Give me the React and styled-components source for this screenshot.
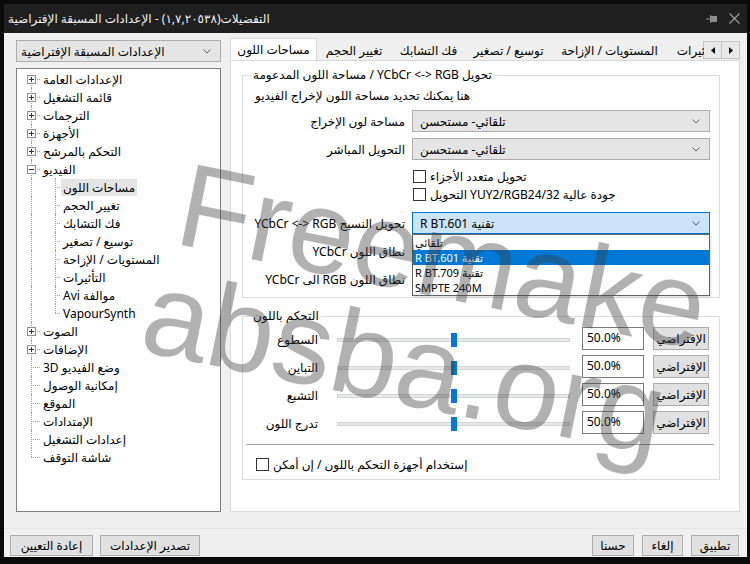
import React from "react";
import styled, { createGlobalStyle } from "styled-components";

const GlobalStyle = createGlobalStyle`
  * { box-sizing: border-box; }
  html, body { margin: 0; padding: 0; background: #0a0a0a; }
  body {
    font-family: "Noto Sans", "DejaVu Sans", sans-serif;
    font-size: 12px;
    color: #000;
  }
`;

const treeData = [
  { label: "الإعدادات العامة", box: "plus" },
  { label: "قائمة التشغيل", box: "plus" },
  { label: "الترجمات", box: "plus" },
  { label: "الأجهزة", box: "plus" },
  { label: "التحكم بالمرشح", box: "plus" },
  {
    label: "الفيديو",
    box: "minus",
    children: [
      "مساحات اللون",
      "تغيير الحجم",
      "فك التشابك",
      "توسيع / تصغير",
      "المستويات / الإزاحة",
      "التأثيرات",
      "موالفة Avi",
      "VapourSynth",
    ],
  },
  { label: "الصوت", box: "plus" },
  { label: "الإضافات", box: "plus" },
  { label: "وضع الفيديو 3D" },
  { label: "إمكانية الوصول" },
  { label: "الموقع" },
  { label: "الإمتدادات" },
  { label: "إعدادات التشغيل" },
  { label: "شاشة التوقف" },
];

const tabs = [
  { label: "مساحات اللون", w: 87, active: true },
  { label: "تغيير الحجم", w: 74 },
  { label: "فك التشابك", w: 75 },
  { label: "توسيع / تصغير", w: 85 },
  { label: "المستويات / الإزاحة", w: 117 },
  { label: "التأثيرات", w: 60 },
];

const sliders = ["السطوع", "التباين", "التشبع", "تدرج اللون"];

// Arabic strings keep right-to-left reading order inside left-aligned controls
const Rtl = styled.span`
  direction: rtl;
  unicode-bidi: isolate;
`;

const Frame = styled.div`
  position: relative;
  width: 750px;
  height: 564px;
  padding: 4px 3px 7px 4px;
  background: #0a0a0a;
  display: flex;
  flex-direction: column;
  overflow: hidden;
`;

const TitleBar = styled.div`
  flex: none;
  height: 29px;
  background: #1f1f1f;
  color: #f0f0f0;
  display: flex;
  align-items: center;
  justify-content: space-between;
  padding: 0 7px 0 4px;
`;

const TitleText = styled(Rtl)`
  font-size: 12px;
  white-space: nowrap;
`;

const TitleButtons = styled.div`
  display: flex;
  align-items: center;
  gap: 11px;
`;

const Body = styled.div`
  flex: 1;
  min-height: 0;
  background: #f0f0f0;
  display: flex;
  flex-direction: column;
`;

const Main = styled.div`
  flex: 1;
  min-height: 0;
  display: flex;
  gap: 9px;
  padding: 5px 7px 0 12px;
`;

const Sidebar = styled.div`
  flex: none;
  width: 205px;
  display: flex;
  flex-direction: column;
  gap: 6px;
  padding-top: 2px;
`;

const Combo = styled.div`
  position: relative;
  height: 22px;
  display: flex;
  align-items: center;
  justify-content: space-between;
  padding: 0 9px 0 ${(p) => p.$pl || 7}px;
  background: ${(p) => (p.$focus ? "#cce4f7" : "#e5e5e5")};
  border: 1px solid ${(p) => (p.$focus ? "#0078d7" : "#adadad")};
  white-space: nowrap;
`;

const Tree = styled.div`
  flex: 1;
  background: #fff;
  border: 1px solid #828282;
  padding-top: 1px;
`;

const TreeRow = styled.div`
  height: 18px;
  display: flex;
  align-items: center;
`;

const Guide = styled.div`
  position: relative;
  flex: none;
  width: ${(p) => p.$w}px;
  height: 18px;

  &::before {
    content: "";
    display: ${(p) => (p.$v ? "block" : "none")};
    position: absolute;
    left: ${(p) => p.$x}px;
    top: ${(p) => (p.$v === "lower" ? 9 : 0)}px;
    bottom: ${(p) => (p.$v === "upper" ? 9 : 0)}px;
    border-left: 1px dotted #a0a0a0;
  }

  &::after {
    content: "";
    display: ${(p) => (p.$h ? "block" : "none")};
    position: absolute;
    left: ${(p) => p.$x}px;
    right: 1px;
    top: 9px;
    border-top: 1px dotted #a0a0a0;
  }
`;

const ExpandBox = styled.span`
  position: absolute;
  z-index: 1;
  left: ${(p) => p.$x - 4}px;
  top: 5px;
  width: 9px;
  height: 9px;
  background: #fff;
  border: 1px solid #919191;

  &::before {
    content: "";
    position: absolute;
    left: 1px;
    top: 3px;
    width: 5px;
    height: 1px;
    background: #333;
  }

  &::after {
    content: "";
    display: ${(p) => (p.$plus ? "block" : "none")};
    position: absolute;
    left: 3px;
    top: 1px;
    width: 1px;
    height: 5px;
    background: #333;
  }
`;

const TreeLabel = styled(Rtl)`
  padding: 0 2px;
  line-height: 17px;
  white-space: nowrap;
  background: ${(p) => (p.$selected ? "#e5e5e5" : "transparent")};
`;

const Content = styled.div`
  flex: 1;
  min-width: 0;
  display: flex;
  flex-direction: column;
`;

const TabStrip = styled.div`
  flex: none;
  height: 22px;
  display: flex;
  align-items: flex-end;
`;

const TabScroll = styled.div`
  flex: 1;
  min-width: 0;
  height: 100%;
  display: flex;
  align-items: flex-end;
  overflow: hidden;
`;

const Tab = styled.div`
  position: relative;
  z-index: ${(p) => (p.$active ? 2 : 0)};
  flex: none;
  width: ${(p) => p.$w}px;
  height: ${(p) => (p.$active ? 23 : 20)}px;
  margin-bottom: ${(p) => (p.$active ? -1 : 0)}px;
  display: flex;
  align-items: center;
  justify-content: center;
  white-space: nowrap;
  background: ${(p) => (p.$active ? "#fff" : "transparent")};
  border: 1px solid ${(p) => (p.$active ? "#d9d9d9" : "transparent")};
  border-bottom: none;
  padding-bottom: ${(p) => (p.$active ? 2 : 0)}px;
`;

const ArrowGroup = styled.div`
  flex: none;
  display: flex;
  margin-bottom: 1px;
`;

const ArrowButton = styled.div`
  width: 19px;
  height: 18px;
  display: flex;
  align-items: center;
  justify-content: center;
  background: #e9e9e9;
  border: 1px solid #c4c4c4;
  margin-left: -1px;
`;

const Panel = styled.div`
  position: relative;
  z-index: 1;
  flex: 1;
  background: #fff;
  border: 1px solid #d9d9d9;
  padding: 6px 19px 0 11px;
`;

const Group = styled.fieldset`
  margin: ${(p) => p.$mt || 0}px 0 0;
  padding: ${(p) => p.$pad};
  border: 1px solid #dcdcdc;
  min-width: 0;
`;

const Legend = styled.legend`
  padding: 0 2px;
  line-height: 16px;
  white-space: nowrap;
`;

const Description = styled.div`
  line-height: 16px;
  padding-left: 4px;
  white-space: nowrap;
`;

const FormRow = styled.div`
  display: grid;
  grid-template-columns: 1fr 298px;
  column-gap: 7px;
  align-items: center;
  margin-top: ${(p) => p.$mt}px;
  height: ${(p) => p.$h || 22}px;
`;

const FieldLabel = styled.div`
  display: flex;
  justify-content: flex-end;
  white-space: nowrap;
  min-width: 0;
`;

const CheckRow = styled.label`
  grid-column: ${(p) => (p.$col ? p.$col : "auto")};
  display: flex;
  align-items: center;
  gap: 4px;
  margin: ${(p) => p.$mt || 0}px 0 0 ${(p) => p.$ml || 0}px;
  white-space: nowrap;
  height: 18px;
`;

const CheckBox = styled.span`
  flex: none;
  width: 13px;
  height: 13px;
  background: #fff;
  border: 1px solid #333;
`;

const ComboWrap = styled.div`
  position: relative;
`;

const Popup = styled.div`
  position: absolute;
  z-index: 5;
  top: 100%;
  left: 0;
  width: 298px;
  background: #fff;
  border: 1px solid #646464;
  box-shadow: 1px 1px 2px rgba(0, 0, 0, 0.15);
`;

const PopupItem = styled.div`
  height: 15px;
  line-height: 15px;
  font-size: 11px;
  padding-left: 2px;
  overflow: hidden;
  white-space: nowrap;
  background: ${(p) => (p.$selected ? "#0078d7" : "transparent")};
  color: ${(p) => (p.$selected ? "#fff" : "#000")};
`;

const SliderRow = styled.div`
  display: flex;
  align-items: center;
  height: 23px;
  margin-top: ${(p) => p.$mt}px;
`;

const SliderLabel = styled.div`
  width: 67px;
  margin-right: 19px;
  display: flex;
  justify-content: flex-end;
  white-space: nowrap;
  padding-top: 1px;
`;

const Track = styled.div`
  position: relative;
  width: 233px;
  height: 4px;
  margin-top: 2px;
  background: #e7eaea;
  border: 1px solid #d6d6d6;
`;

const Thumb = styled.span`
  position: absolute;
  left: 113px;
  top: -6px;
  width: 6px;
  height: 14px;
  background: #0078d7;
`;

const EditBox = styled.div`
  width: 62px;
  height: 23px;
  margin-left: 12px;
  border: 1px solid #7a7a7a;
  background: #fff;
  padding-left: 4px;
  line-height: 19px;
`;

const Button = styled.div`
  flex: none;
  width: ${(p) => p.$w}px;
  height: ${(p) => p.$h || 21}px;
  margin-left: ${(p) => p.$ml || 0}px;
  display: flex;
  align-items: center;
  justify-content: center;
  background: #e1e1e1;
  border: 1px solid #adadad;
  white-space: nowrap;
`;

const Separator = styled.div`
  margin: 10px -5px 0;
  border-top: 1px solid #a0a0a0;
`;

const Footer = styled.div`
  flex: none;
  margin-top: 16px;
  border-top: 1px solid #e4e4e4;
  padding: 6px 8px 1px 6px;
  display: flex;
  justify-content: space-between;
`;

const ButtonGroup = styled.div`
  display: flex;
  gap: ${(p) => p.$gap}px;
`;

const Watermark = styled.div`
  position: absolute;
  z-index: 20;
  left: 172px;
  top: 146px;
  pointer-events: none;
  font-family: "Liberation Sans", Arial, sans-serif;
  font-size: 119px;
  line-height: 112px;
  color: rgba(60, 60, 60, 0.4);
  transform: rotate(11.5deg);
  transform-origin: 0 98px;
  white-space: nowrap;
`;

const WatermarkLine = styled.div`
  margin-left: ${(p) => p.$ml || 0}px;
`;

const Chevron = () => (
  <svg width="8" height="5" viewBox="0 0 8 5">
    <path d="M0.5 0.5 L4 4 L7.5 0.5" fill="none" stroke="#606060" strokeWidth="1" />
  </svg>
);

const PinIcon = () => (
  <svg width="12" height="10" viewBox="0 0 12 10">
    <path d="M0 5 H4" stroke="#8c8c8c" strokeWidth="1" />
    <path d="M4.5 1 V9" stroke="#8c8c8c" strokeWidth="1" />
    <rect x="5" y="2" width="6" height="6" fill="#8c8c8c" />
  </svg>
);

const CloseIcon = () => (
  <svg width="11" height="11" viewBox="0 0 11 11">
    <path d="M0.5 0.5 L10.5 10.5 M10.5 0.5 L0.5 10.5" stroke="#a0a0a0" strokeWidth="1.1" />
  </svg>
);

const ArrowIcon = ({ dir }) => (
  <svg width="4" height="7" viewBox="0 0 4 7">
    {dir === "left" ? <path d="M4 0 V7 L0 3.5 Z" fill="#000" /> : <path d="M0 0 V7 L4 3.5 Z" fill="#000" />}
  </svg>
);

const SettingsTree = () => {
  const rows = [];
  treeData.forEach((item, i) => {
    const first = i === 0;
    const last = i === treeData.length - 1;
    rows.push(
      <TreeRow key={item.label}>
        <Guide $w={24} $x={14} $v={first ? "lower" : last ? "upper" : "full"} $h>
          {item.box && <ExpandBox $x={14} $plus={item.box === "plus"} />}
        </Guide>
        <TreeLabel>{item.label}</TreeLabel>
      </TreeRow>
    );
    (item.children || []).forEach((child, j) => {
      const lastChild = j === item.children.length - 1;
      rows.push(
        <TreeRow key={child}>
          <Guide $w={24} $x={14} $v="full" />
          <Guide $w={20} $x={14} $v={lastChild ? "upper" : "full"} $h />
          <TreeLabel $selected={j === 0}>{child}</TreeLabel>
        </TreeRow>
      );
    });
  });
  return <Tree>{rows}</Tree>;
};

const App = () => {
  return (
    <>
      <GlobalStyle />
      <Frame>
        <TitleBar>
          <TitleText>التفضيلات(١,٧,٢٠٥٣٨) - الإعدادات المسبقة الإفتراضية</TitleText>
          <TitleButtons>
            <PinIcon />
            <CloseIcon />
          </TitleButtons>
        </TitleBar>
        <Body>
          <Main>
            <Sidebar>
              <Combo $pl={4}>
                <span>الإعدادات المسبقة الإفتراضية</span>
                <Chevron />
              </Combo>
              <SettingsTree />
            </Sidebar>
            <Content>
              <TabStrip>
                <TabScroll>
                  {tabs.map((t) => (
                    <Tab key={t.label} $w={t.w} $active={t.active}>
                      {t.label}
                    </Tab>
                  ))}
                </TabScroll>
                <ArrowGroup>
                  <ArrowButton>
                    <ArrowIcon dir="left" />
                  </ArrowButton>
                  <ArrowButton>
                    <ArrowIcon dir="right" />
                  </ArrowButton>
                </ArrowGroup>
              </TabStrip>
              <Panel>
                <Group $pad="5px 9px 7px 8px">
                  <Legend>
                    <Rtl>تحويل YCbCr &lt;-&gt; RGB / مساحة اللون المدعومة</Rtl>
                  </Legend>
                  <Description>هنا يمكنك تحديد مساحة اللون لإخراج الفيديو</Description>
                  <FormRow $mt={6}>
                    <FieldLabel>مساحة لون الإخراج</FieldLabel>
                    <Combo>
                      <span>تلقائي- مستحسن</span>
                      <Chevron />
                    </Combo>
                  </FormRow>
                  <FormRow $mt={6}>
                    <FieldLabel>التحويل المباشر</FieldLabel>
                    <Combo>
                      <span>تلقائي- مستحسن</span>
                      <Chevron />
                    </Combo>
                  </FormRow>
                  <FormRow $mt={7} $h={18}>
                    <CheckRow $col={2} $ml={1}>
                      <CheckBox />
                      <Rtl>تحويل متعدد الأجزاء</Rtl>
                    </CheckRow>
                  </FormRow>
                  <FormRow $mt={0} $h={18}>
                    <CheckRow $col={2} $ml={1}>
                      <CheckBox />
                      <Rtl>جودة عالية YUY2/RGB24/32 التحويل</Rtl>
                    </CheckRow>
                  </FormRow>
                  <FormRow $mt={9}>
                    <FieldLabel>
                      <Rtl>تحويل النسيج YCbCr &lt;-&gt; RGB</Rtl>
                    </FieldLabel>
                    <ComboWrap>
                      <Combo $focus>
                        <Rtl>تقنية R BT.601</Rtl>
                        <Chevron />
                      </Combo>
                      <Popup>
                        <PopupItem>تلقائي</PopupItem>
                        <PopupItem $selected>
                          <Rtl>تقنية R BT.601</Rtl>
                        </PopupItem>
                        <PopupItem>
                          <Rtl>تقنية R BT.709</Rtl>
                        </PopupItem>
                        <PopupItem>SMPTE 240M</PopupItem>
                      </Popup>
                    </ComboWrap>
                  </FormRow>
                  <FormRow $mt={6}>
                    <FieldLabel>
                      <Rtl>نطاق اللون YCbCr</Rtl>
                    </FieldLabel>
                    <Combo />
                  </FormRow>
                  <FormRow $mt={6}>
                    <FieldLabel>
                      <Rtl>نطاق اللون RGB الى YCbCr</Rtl>
                    </FieldLabel>
                    <Combo />
                  </FormRow>
                </Group>

                <Group $mt={10} $pad="3px 10px 6px 8px">
                  <Legend>التحكم باللون</Legend>
                  {sliders.map((s, i) => (
                    <SliderRow key={s} $mt={i === 0 ? 0 : 5}>
                      <SliderLabel>{s}</SliderLabel>
                      <Track>
                        <Thumb />
                      </Track>
                      <EditBox>50.0%</EditBox>
                      <Button $w={56} $h={23} $ml={9}>
                        الإفتراضي
                      </Button>
                    </SliderRow>
                  ))}
                  <Separator />
                  <CheckRow $ml={5} $mt={10}>
                    <CheckBox />
                    <Rtl>إستخدام أجهزة التحكم باللون / إن أمكن</Rtl>
                  </CheckRow>
                </Group>
              </Panel>
            </Content>
          </Main>
          <Footer>
            <ButtonGroup $gap={7}>
              <Button $w={83}>إعادة التعيين</Button>
              <Button $w={100}>تصدير الإعدادات</Button>
            </ButtonGroup>
            <ButtonGroup $gap={8}>
              <Button $w={42}>حسنا</Button>
              <Button $w={41}>إلغاء</Button>
              <Button $w={48}>تطبيق</Button>
            </ButtonGroup>
          </Footer>
        </Body>
        <Watermark>
          <WatermarkLine>Freemake</WatermarkLine>
          <WatermarkLine $ml={-13}>absba.org</WatermarkLine>
        </Watermark>
      </Frame>
    </>
  );
};

export default App;
